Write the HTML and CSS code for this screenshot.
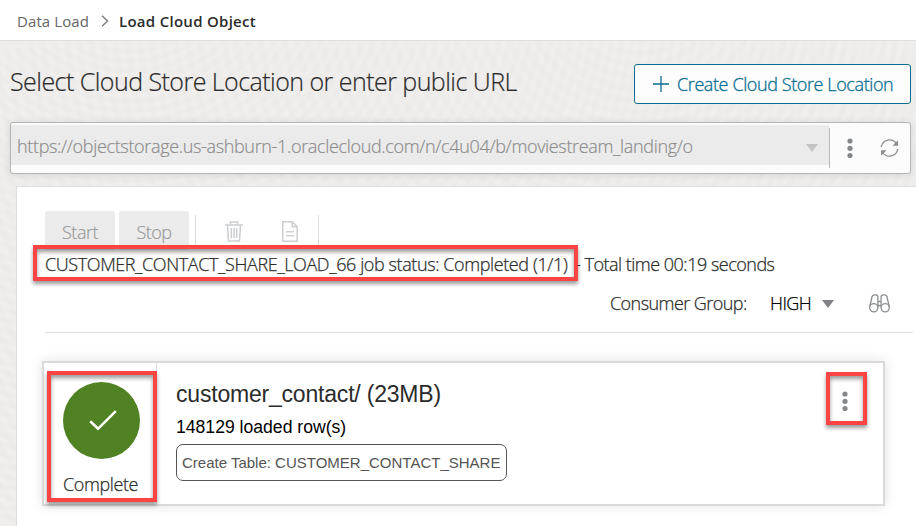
FILE: index.html
```html
<!DOCTYPE html>
<html lang="en">
<head>
<meta charset="utf-8">
<title>Load Cloud Object</title>
<link rel="stylesheet" href="styles.css">
</head>
<body>
<header class="crumbs">
  <span class="crumb">Data Load</span>
  <svg class="chevron" width="8" height="12" viewBox="0 0 8 12"><path d="M1 .8 6.6 6 1 11.2"/></svg>
  <span class="crumb-current">Load Cloud Object</span>
</header>
<main class="page">
  <div class="title-row">
    <h1 class="title">Select Cloud Store Location or enter public URL</h1>
    <button class="create">
      <svg width="16" height="16" viewBox="0 0 16 16"><path d="M8 0v16M0 8h16"/></svg>
      <span class="create-label">Create Cloud Store Location</span>
    </button>
  </div>
  <div class="location">
    <div class="location-field">
      <span class="url">https://objectstorage.us-ashburn-1.oraclecloud.com/n/c4u04/b/moviestream_landing/o</span>
      <span class="caret caret-pale"></span>
    </div>
    <div class="location-tools">
      <svg class="dots" width="6" height="20" viewBox="0 0 6 20"><circle cx="3" cy="3" r="2.6"/><circle cx="3" cy="10.3" r="2.6"/><circle cx="3" cy="17.6" r="2.6"/></svg>
      <svg class="refresh" width="19" height="18" viewBox="0 0 19 18"><path d="M1.3 8A8.3 8.3 0 0 1 16.4 4.5M17.7 10A8.3 8.3 0 0 1 2.6 13.5"/><path class="fill" d="M18 1.2v5.5h-5.5zM1 16.8v-5.5h5.5z"/></svg>
    </div>
  </div>
  <section class="panel">
    <div class="toolbar">
      <button class="tool"><span class="tool-start">Start</span></button>
      <button class="tool"><span class="tool-stop">Stop</span></button>
      <div class="tool-icons">
        <svg width="18" height="21" viewBox="0 0 18 21"><path d="M0 4h18M5.5 4V1h7v3M2.5 4l1 16h11l1-16M6.3 7v10M9 7v10M11.7 7v10"/></svg>
        <svg width="16" height="21" viewBox="0 0 16 21"><path d="M.8.8h9.4l5 5v14.4H.8zM10.2.8v5h5M4 10.8h8M4 14.8h8"/></svg>
      </div>
    </div>
    <div class="status">
      <span class="job">CUSTOMER_CONTACT_SHARE_LOAD_66 job status: Completed (1/1)</span>
      <span class="total">- Total time 00:19 seconds</span>
      <span class="mark mark-status"></span>
    </div>
    <div class="group">
      <span class="group-label">Consumer Group:</span>
      <span class="group-value">HIGH</span>
      <span class="caret"></span>
      <svg class="binoculars" width="21" height="19" viewBox="0 0 21 19"><circle cx="4.8" cy="13.8" r="4.1"/><circle cx="16.2" cy="13.8" r="4.1"/><path d="M.8 12.5 3 3Q3.4.8 5.5.8h1.3Q8.9.8 8.9 3v10M20.2 12.5 18 3Q17.6.8 15.5.8h-1.3q-2.1 0-2.1 2.2v10M8.9 7.5h3.2M8.9 11.5h3.2"/></svg>
    </div>
    <article class="card">
      <div class="state">
        <div class="disc"><svg width="28" height="21" viewBox="0 0 28 21"><path d="M1.2 11.2 9 18.8 26.8 1.2"/></svg></div>
        <span class="state-label">Complete</span>
        <span class="mark mark-state"></span>
      </div>
      <div class="details">
        <div class="name">customer_contact/ (23MB)</div>
        <div class="rows">148129 loaded row(s)</div>
        <div class="chip">Create Table: CUSTOMER_CONTACT_SHARE</div>
      </div>
      <div class="menu">
        <svg class="dots" width="6" height="20" viewBox="0 0 6 20"><circle cx="3" cy="3" r="2.6"/><circle cx="3" cy="10.3" r="2.6"/><circle cx="3" cy="17.6" r="2.6"/></svg>
        <span class="mark mark-menu"></span>
      </div>
    </article>
  </section>
</main>
</body>
</html>
```
FILE: styles.css
```css
* { box-sizing: border-box; }
body {
  margin: 0;
  width: 916px;
  height: 526px;
  overflow: hidden;
  background: #fff;
  color: #2b2b2b;
  font-family: "Open Sans", "Noto Sans", sans-serif;
  font-weight: 350;
}
span, h1, .chip, .name, .rows { white-space: nowrap; }
button { padding: 0; font: inherit; }
svg { display: block; flex: none; fill: none; stroke: #8b8e90; stroke-width: 1.3; }

.crumbs {
  display: flex;
  align-items: center;
  height: 41px;
  padding: 2px 0 0 17px;
  border-bottom: 1px solid #dedede;
  font-size: 15px;
}
.crumb { width: 84px; color: #666; font-weight: 400; letter-spacing: .1px; }
.chevron { width: 8px; margin-right: 10px; stroke: #777; }
.crumb-current { font-weight: 600; letter-spacing: .28px; }

.page {
  height: 485px;
  padding-left: 10px;
  background:
    repeating-radial-gradient(circle at 130px -90px, rgba(110,105,100,.022) 0, transparent 5px, rgba(110,105,100,.022) 10px),
    repeating-radial-gradient(circle at 640px -60px, rgba(110,105,100,.022) 0, transparent 6px, rgba(110,105,100,.022) 12px),
    #f1f0ee;
}
.title-row { display: flex; align-items: flex-start; justify-content: space-between; height: 81px; padding: 23px 5px 0 0; }
.title { margin: 0; font-size: 25px; line-height: 34px; font-weight: 330; letter-spacing: -.54px; -webkit-text-stroke: .2px; }
.create {
  display: flex;
  align-items: center;
  width: 277px;
  height: 40px;
  padding-left: 18px;
  gap: 8px;
  border: 1px solid #086d92;
  border-radius: 3px;
  background: #fdfdfd;
  color: #086d92;
  font-size: 18px;
  letter-spacing: -.4px;
  -webkit-text-stroke: .3px;
}
.create svg { stroke: #086d92; }

.location {
  display: flex;
  width: 901px;
  height: 52px;
  padding-top: 2px;
  border: 1px solid #b4b4b4;
  border-radius: 3px;
  background: #fcfcfc;
  box-shadow: 0 1px 8px rgba(0,0,0,.1);
}
.location-field {
  display: flex;
  align-items: center;
  justify-content: space-between;
  width: 818px;
  height: 40px;
  padding: 0 11px 0 6px;
  background: #ebebeb;
}
.url { color: #8d8d8d; font-size: 18px; line-height: 38px; padding-top: 2px; letter-spacing: -.34px; -webkit-text-stroke: .2px; }
.caret { width: 0; border: 6px solid transparent; border-top: 8px solid #7f8184; border-bottom: 0; }
.caret-pale { border-top-color: #c4c4c4; margin-top: 6px; }
.location-tools { display: flex; align-items: center; gap: 27px; height: 40px; margin-top: 3px; padding-left: 17px; border-left: 1px solid #b8b8b8; }
.dots { fill: #85888b; stroke: none; }
.refresh .fill { fill: #8b8e90; stroke: none; }

.panel {
  width: 910px;
  height: 350px;
  margin: 12px 0 0 6px;
  padding: 24px 0 0 28px;
  border: 1px solid #dedede;
  background: #fff;
}
.toolbar { display: flex; gap: 4px; height: 39px; }
.tool { width: 70px; height: 39px; padding-top: 3px; border: 0; border-radius: 3px 3px 0 0; background: #ebebeb; color: #999; font-size: 18px; letter-spacing: -.5px; -webkit-text-stroke: .2px; }
.tool-icons { display: flex; gap: 39px; width: 124px; height: 32px; margin: 4px 0 0 2px; padding: 6px 0 0 29px; border: solid #dedede; border-width: 0 1px; }
.tool-icons svg { stroke: #ccced2; stroke-width: 1.5; }

.status { position: relative; display: flex; height: 28px; font-size: 18px; line-height: 28px; -webkit-text-stroke: .25px; }
.job { width: 530px; letter-spacing: -.4px; }
.total { letter-spacing: -.5px; }
.group { display: flex; align-items: center; width: 868px; height: 55px; padding: 0 22px 3px 565px; border-bottom: 1px solid #dedede; font-size: 18px; letter-spacing: -.56px; -webkit-text-stroke: .25px; }
.group-label, .group-value { margin-top: -2px; }
.group-label { width: 160px; }
.group-value { width: 52px; color: #000; }
.binoculars { margin-left: 35px; }

.mark { position: absolute; border: 4px solid #fd4444; box-shadow: 0 3px 4px rgba(0,0,0,.4), inset 0 3px 4px rgba(0,0,0,.4); }
.mark-status { left: -12px; top: -5px; width: 545px; height: 36px; }

.card {
  display: flex;
  width: 843px;
  height: 145px;
  margin: 28px 0 0 -3px;
  border: 2px solid #dadada;
  background: #fff;
  box-shadow: 0 0 12px rgba(0,0,0,.12);
}
.state { position: relative; width: 113px; padding: 19px 0 0 19px; border-right: 1px solid #dedede; }
.disc { display: grid; place-items: center; width: 77px; height: 77px; padding-left: 2px; border-radius: 50%; background: #508223; }
.disc svg { stroke: #fff; stroke-width: 2.6; }
.state-label { display: block; margin-top: 13px; font-size: 18px; line-height: 25px; letter-spacing: -.4px; -webkit-text-stroke: .25px; }
.mark-state { left: 3px; top: 8px; width: 110px; height: 131px; }
.details { flex: 1; padding: 15px 0 0 19px; font-family: "Liberation Sans", Arial, sans-serif; font-weight: 400; }
.name { font-size: 23px; line-height: 32px; letter-spacing: -.2px; }
.rows { margin-top: 5px; color: #000; font-size: 17.6px; line-height: 25px; }
.chip { width: 331px; height: 37px; margin-top: 4px; padding-left: 5px; border: 1px solid #555; border-radius: 7px; color: #555; font-size: 15px; line-height: 35px; }
.menu { position: relative; width: 55px; padding: 28px 0 0 14px; }
.mark-menu { left: -2px; top: 9px; width: 41px; height: 53px; }
```
